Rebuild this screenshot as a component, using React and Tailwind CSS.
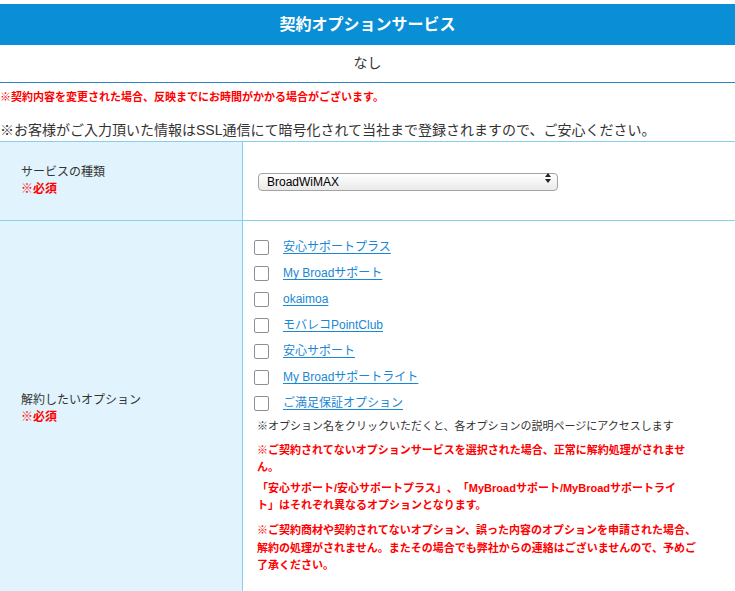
import React from "react";

const options = [
  "安心サポートプラス",
  "My Broadサポート",
  "okaimoa",
  "モバレコPointClub",
  "安心サポート",
  "My Broadサポートライト",
  "ご満足保証オプション",
];

const App = () => {
  return (
    <div className="min-h-screen bg-white pt-[4px] text-[#333] [text-spacing-trim:space-all] font-['Liberation_Sans','Noto_Sans_CJK_JP',sans-serif]">
      {/* header */}
      <div className="flex h-[41px] items-center justify-center bg-[#0a8fd6] text-[16px] font-bold text-white">
        契約オプションサービス
      </div>
      <div className="flex h-[38px] items-center justify-center border-b border-[#2a82c2] text-[14px]">
        なし
      </div>

      <p className="mt-[6px] text-[11px] leading-[16px] font-bold text-[#ff0000]">
        ※契約内容を変更された場合、反映までにお時間がかかる場合がございます。
      </p>
      <p className="mt-[15px] text-[14px] leading-[20px] whitespace-nowrap">
        ※お客様がご入力頂いた情報はSSL通信にて暗号化されて当社まで登録されますので、ご安心ください。
      </p>

      {/* form table */}
      <div className="mt-[1px] border-t border-[#86cdee]">
        <div className="flex h-[79px] border-b border-[#86cdee]">
          <div className="flex w-[243px] shrink-0 flex-col justify-center border-r border-[#86cdee] bg-[#e1f3fc] px-[21px] text-[12px] leading-[17px]">
            <span>サービスの種類</span>
            <span className="font-bold text-[#ff0000]">※必須</span>
          </div>
          <div className="flex flex-1 items-center pl-[15px]">
            <div className="relative w-[300px]">
              <select className="h-[18px] w-full appearance-none rounded-[4px] border border-[#a3a3a3] bg-gradient-to-b from-white to-[#e9e9e9] pl-[8px] text-[12px] leading-[16px] text-black outline-none">
                <option>BroadWiMAX</option>
              </select>
              <svg className="pointer-events-none absolute right-[7px] top-[4px]" width="6" height="10" viewBox="0 0 6 10">
                <path d="M3 0 L6 4 L0 4 Z" fill="#222" />
                <path d="M0 6 L6 6 L3 10 Z" fill="#222" />
              </svg>
            </div>
          </div>
        </div>

        <div className="flex">
          <div className="flex w-[243px] shrink-0 flex-col justify-center border-r border-[#86cdee] bg-[#e1f3fc] px-[21px] text-[12px] leading-[17px]">
            <span>解約したいオプション</span>
            <span className="font-bold text-[#ff0000]">※必須</span>
          </div>
          <div className="flex-1 pt-[13px] pb-[22px]">
            <div className="flex flex-col pl-[11px]">
              {options.map((name) => (
                <label key={name} className="flex h-[26px] items-center gap-[14px]">
                  <input
                    type="checkbox"
                    className="h-[15px] w-[15px] appearance-none rounded-[2px] border border-[#8f8f8f] bg-white"
                  />
                  <a href="#" className="text-[12px] text-[#1a87d4] underline underline-offset-[2px]">
                    {name}
                  </a>
                </label>
              ))}
            </div>
            <div className="pl-[14px]">
              <p className="mt-[2px] text-[11px] leading-[16px] text-[#333]">
                ※オプション名をクリックいただくと、各オプションの説明ページにアクセスします
              </p>
              <div className="text-[11px] font-bold text-[#ff0000]">
                <p className="mt-[8px] w-[442px] leading-[17px]">
                  ※ご契約されてないオプションサービスを選択された場合、正常に解約処理がされません。
                </p>
                <p className="mt-[4px] w-[438px] leading-[17px]">
                  「安心サポート/安心サポートプラス」、「MyBroadサポート/MyBroadサポートライト」はそれぞれ異なるオプションとなります。
                </p>
                <p className="mt-[8px] w-[442px] leading-[17.5px]">
                  ※ご契約商材や契約されてないオプション、誤った内容のオプションを申請された場合、解約の処理がされません。またその場合でも弊社からの連絡はございませんので、予めご了承ください。
                </p>
              </div>
            </div>
          </div>
        </div>
      </div>
    </div>
  );
};

export default App;
